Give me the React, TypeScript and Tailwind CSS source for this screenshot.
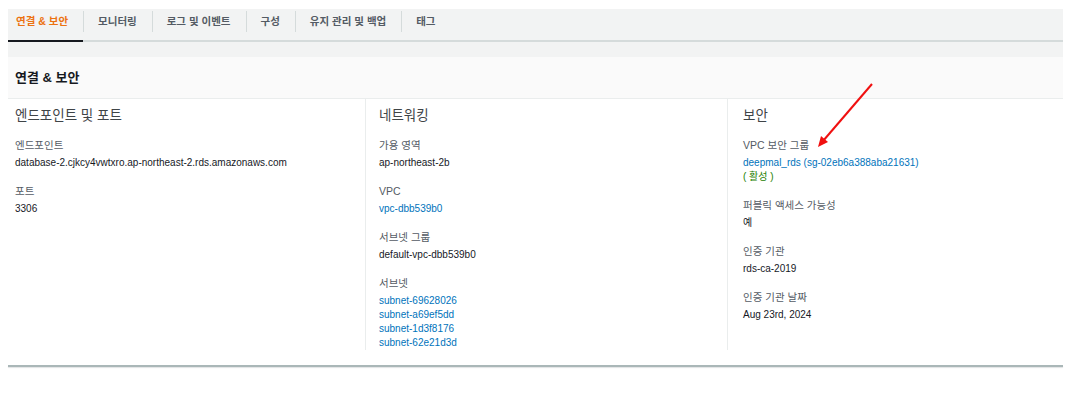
import React from 'react'

const FONT = '"Liberation Sans", "Noto Sans CJK KR", sans-serif'

const TABS = ['연결 & 보안', '모니터링', '로그 및 이벤트', '구성', '유지 관리 및 백업', '태그']

type Field = { label: string; values: Array<{ text: string; cls: string }> }

const plain = (text: string) => ({ text, cls: 'text-[#16191f]' })
const link = (text: string) => ({ text, cls: 'text-[#0073bb]' })

const COLUMNS: Array<{ title: string; pad: string; border: boolean; fields: Field[] }> = [
  {
    title: '엔드포인트 및 포트',
    pad: 'pl-[7px]',
    border: false,
    fields: [
      { label: '엔드포인트', values: [plain('database-2.cjkcy4vwtxro.ap-northeast-2.rds.amazonaws.com')] },
      { label: '포트', values: [plain('3306')] },
    ],
  },
  {
    title: '네트워킹',
    pad: 'pl-[13px]',
    border: true,
    fields: [
      { label: '가용 영역', values: [plain('ap-northeast-2b')] },
      { label: 'VPC', values: [link('vpc-dbb539b0')] },
      { label: '서브넷 그룹', values: [plain('default-vpc-dbb539b0')] },
      {
        label: '서브넷',
        values: [link('subnet-69628026'), link('subnet-a69ef5dd'), link('subnet-1d3f8176'), link('subnet-62e21d3d')],
      },
    ],
  },
  {
    title: '보안',
    pad: 'pl-[15px]',
    border: true,
    fields: [
      {
        label: 'VPC 보안 그룹',
        values: [link('deepmal_rds (sg-02eb6a388aba21631)'), { text: '( 활성 )', cls: 'text-[#1d8102]' }],
      },
      { label: '퍼블릭 액세스 가능성', values: [plain('예')] },
      { label: '인증 기관', values: [plain('rds-ca-2019')] },
      { label: '인증 기관 날짜', values: [plain('Aug 23rd, 2024')] },
    ],
  },
]

export default function App() {
  return (
    <div className="relative min-h-[393px] w-[1087px] bg-white" style={{ fontFamily: FONT }}>
      <div className="ml-2 w-[1055px] pt-[9px]">
        {/* tabs */}
        <div className="flex h-[33px] border-b-2 border-[#d5dbdb] bg-[#f2f3f3]">
          {TABS.map((tab, i) => (
            <React.Fragment key={tab}>
              {i > 0 && <span className="mt-[2px] h-[21px] w-px bg-[#d5dbdb]" />}
              <div
                className={
                  i === 0
                    ? '-mb-[2px] border-b-2 border-[#16191f] pl-2 pr-[15px] pt-[5px] text-[10.5px] font-bold leading-[14px] text-[#ec7211]'
                    : 'pl-[14px] pr-[15px] pt-[5px] text-[10.5px] font-bold leading-[14px] text-[#545b64]'
                }
              >
                {tab}
              </div>
            </React.Fragment>
          ))}
        </div>
        <div className="h-[15px] bg-[#f2f3f3]" />

        {/* panel header */}
        <div className="flex h-[42px] items-center border-b border-[#eaeded] bg-[#fafafa] pl-[7px] pt-px text-[13px] font-bold text-[#16191f]">
          연결 &amp; 보안
        </div>

        {/* columns */}
        <div className="grid grid-cols-[357px_362px_1fr]">
          {COLUMNS.map((col) => (
            <div key={col.title} className={`${col.pad} ${col.border ? 'border-l border-[#eaeded]' : ''} pt-[7px]`}>
              <h3 className="text-[13.5px] leading-[19px] text-[#3f4447]">{col.title}</h3>
              <div className="mt-[13px] flex flex-col gap-[14px]">
                {col.fields.map((f) => (
                  <div key={f.label}>
                    <p className="text-[10.5px] leading-[14px] text-[#545b64]">{f.label}</p>
                    <div className="mt-[4px]">
                      {f.values.map((v) => (
                        <p key={v.text} className={`text-[10px] leading-[14px] ${v.cls}`}>
                          {v.text}
                        </p>
                      ))}
                    </div>
                  </div>
                ))}
              </div>
            </div>
          ))}
        </div>

        <div className="mt-[15px] h-[2px] bg-[#aab7b8] shadow-[0_1px_1px_rgba(0,28,36,0.12)]" />
      </div>

      {/* red annotation arrow */}
      <svg className="pointer-events-none absolute left-0 top-0" width="1087" height="393">
        <line x1="872" y1="84" x2="823" y2="141" stroke="#f01010" strokeWidth="2" />
        <polygon points="818,147 828,142 821,136" fill="#f01010" />
      </svg>
    </div>
  )
}
